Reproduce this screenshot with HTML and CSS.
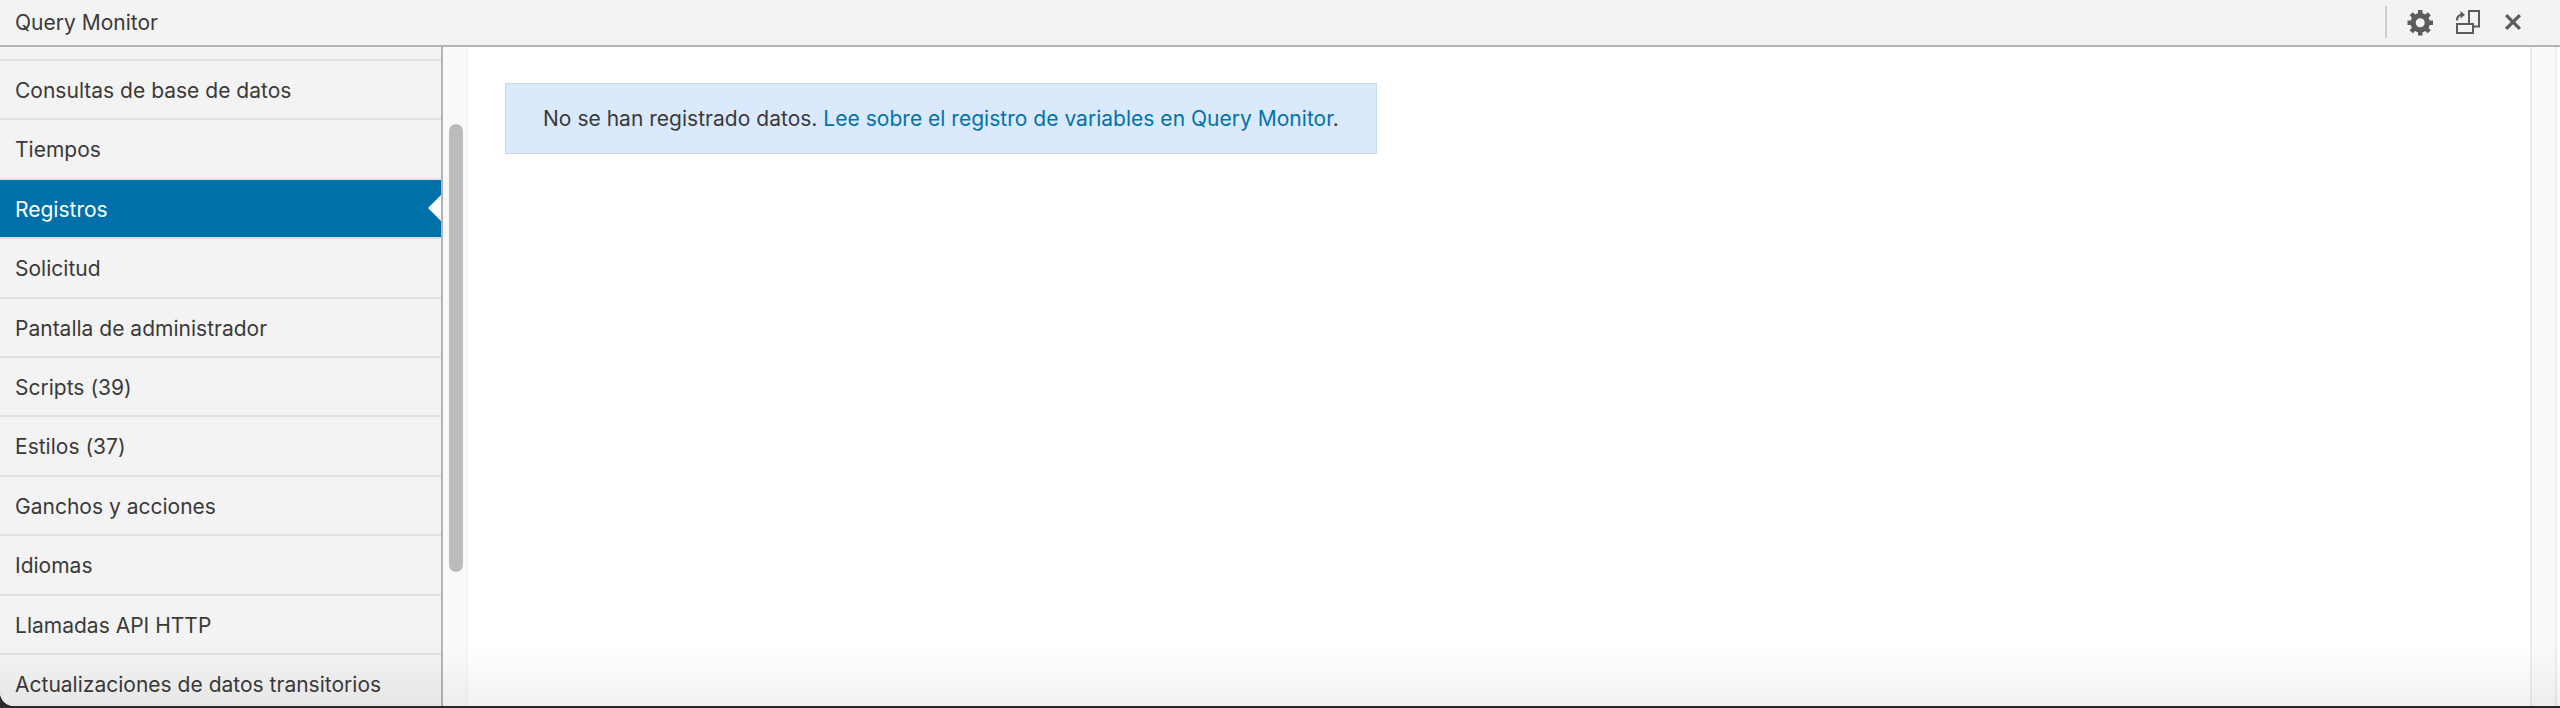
FILE: index.html
```html
<!DOCTYPE html>
<html lang="es">
<head>
<meta charset="utf-8">
<title>Query Monitor</title>
<link rel="stylesheet" href="styles.css">
</head>
<body>
<div class="screen">
  <div class="window">
    <header class="titlebar">
      <span class="title">Query Monitor</span>
      <div class="tools">
        <svg class="icon" width="30" height="30" viewBox="0 0 20 20"><path d="M18 12h-2.180c-.17.7-.44 1.350-.81 1.930l1.540 1.540-2.100 2.100-1.540-1.540c-.58.36-1.230.63-1.910.79V19H8v-2.180c-.68-.16-1.330-.43-1.910-.79l-1.540 1.540-2.120-2.120 1.540-1.540c-.36-.58-.63-1.230-.79-1.910H1V9.030h2.170c.16-.7.44-1.350.8-1.940L2.430 5.550l2.100-2.100 1.540 1.540c.58-.37 1.240-.64 1.930-.81V2h3v2.180c.68.16 1.330.43 1.910.79l1.540-1.540 2.120 2.120-1.540 1.540c.36.59.64 1.240.8 1.940H18V12zm-8.500 1.500c1.660 0 3-1.340 3-3s-1.340-3-3-3-3 1.340-3 3 1.340 3 3 3z"/></svg>
        <svg class="icon" width="24" height="24" viewBox="0 0 24 24"><path fill-rule="evenodd" d="M12 0h12v17.500h-6V24H0V13h12V0zm2 2v11h4v2.500h4V2h-8zM2 15v7h14v-7H2zM0 10.500C0 6.500 2 4.500 4.500 4V1L9 4.800 4.500 8.500V6C3 6.500 2.200 8 2.200 10.500H0z"/></svg>
        <svg class="icon close" width="18" height="18" viewBox="0 0 18 18"><path d="M3.300 1 9 6.700 14.700 1 17 3.300 11.300 9l5.700 5.700-2.300 2.300L9 11.300 3.300 17 1 14.700 6.700 9 1 3.300z"/></svg>
      </div>
    </header>
    <div class="panels">
      <nav class="sidebar">
        <ul class="menu">
          <li class="item stub"></li>
          <li class="item">Consultas de base de datos</li>
          <li class="item">Tiempos</li>
          <li class="item active">Registros</li>
          <li class="item">Solicitud</li>
          <li class="item">Pantalla de administrador</li>
          <li class="item">Scripts (39)</li>
          <li class="item">Estilos (37)</li>
          <li class="item">Ganchos y acciones</li>
          <li class="item">Idiomas</li>
          <li class="item">Llamadas API HTTP</li>
          <li class="item">Actualizaciones de datos transitorios</li>
        </ul>
      </nav>
      <div class="track"><div class="thumb"></div></div>
      <main class="content">
        <p class="notice">No se han registrado datos. <a href="#">Lee sobre el registro de variables en Query Monitor</a>.</p>
      </main>
      <div class="gutter"></div>
    </div>
    <div class="fade"></div>
  </div>
</div>
</body>
</html>
```
FILE: styles.css
```css
* { box-sizing: border-box; }
html, body { margin: 0; padding: 0; height: 100%; overflow: hidden; }
body { font-family: Inter, "Liberation Sans", sans-serif; color: #3a3a3a; }
.screen { height: 708px; background: #2a2a2a; padding-bottom: 2px; }
.window { position: relative; height: 706px; background: #fff; border-bottom-left-radius: 14px; overflow: hidden; display: flex; flex-direction: column; }
.titlebar { flex: none; height: 47px; background: #f3f3f3; border-bottom: 2px solid #b4b4b4; display: flex; align-items: center; justify-content: space-between; padding-left: 15px; }
.title { font-size: 21px; }
.tools { display: flex; align-items: center; height: 32px; margin-bottom: 2px; border-left: 2px solid #cfcfcf; margin-right: 38px; padding-left: 19px; gap: 20px; }
.icon { fill: #5c5c5c; display: block; }
.close { margin-left: 4px; }
.panels { flex: 1; display: flex; min-height: 0; }
.sidebar { flex: none; width: 443px; background: #f3f3f3; border-right: 2px solid #b4b4b4; overflow: hidden; }
.menu { list-style: none; margin: 0; padding: 0; }
.item { height: 59.400px; line-height: 59px; padding-left: 15px; font-size: 21px; letter-spacing: .01px; border-bottom: 2px solid #e0e0e0; white-space: nowrap; position: relative; }
.stub { height: 14px; }
.active { background: #0070aa; color: #fff; border-bottom-color: #e0e0e0; }
.active::after { content: ""; position: absolute; right: 0; top: 15px; border: 13px solid transparent; border-left-width: 0; border-right-color: #fff; }
.track { flex: none; width: 25px; background: #fafafa; border-right: 1px solid #efefef; padding: 77px 4px 0 6px; }
.thumb { height: 448px; border-radius: 8px; background: #bcbcbc; }
.content { flex: 1; padding: 36px 0 0 37px; }
.notice { margin: 0; width: 872px; height: 71px; line-height: 69px; padding-left: 37px; font-size: 21px; letter-spacing: .02px; background: #dbe9fd; border: 1px solid #c7d9ef; white-space: nowrap; }
.notice a { color: #0073aa; text-decoration: none; }
.gutter { flex: none; width: 27px; margin-right: 3px; background: #fafafa; border-left: 2px solid #ececec; border-right: 2px solid #ececec; }
.fade { position: absolute; left: 0; right: 0; bottom: 0; height: 60px; pointer-events: none; background: linear-gradient(to bottom, rgba(0,0,0,0), rgba(0,0,0,.05)); }
```
